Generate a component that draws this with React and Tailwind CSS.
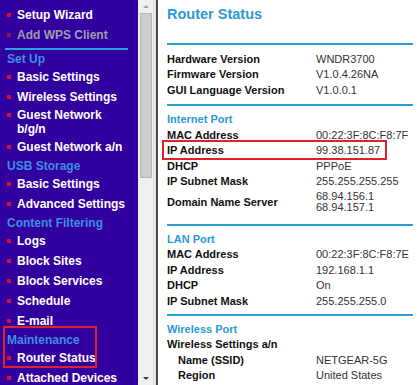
import React from 'react';

const menu = [
  { type: 'item', label: 'Setup Wizard' },
  { type: 'item', label: 'Add WPS Client', dim: true },
  { type: 'line' },
  { type: 'head', label: 'Set Up' },
  { type: 'item', label: 'Basic Settings' },
  { type: 'item', label: 'Wireless Settings' },
  { type: 'item2', label: 'Guest Network', label2: 'b/g/n' },
  { type: 'item', label: 'Guest Network a/n' },
  { type: 'head', label: 'USB Storage' },
  { type: 'item', label: 'Basic Settings' },
  { type: 'item', label: 'Advanced Settings' },
  { type: 'head', label: 'Content Filtering' },
  { type: 'item', label: 'Logs' },
  { type: 'item', label: 'Block Sites' },
  { type: 'item', label: 'Block Services' },
  { type: 'item', label: 'Schedule' },
  { type: 'item', label: 'E-mail' },
  { type: 'marked' },
  { type: 'item', label: 'Attached Devices' },
];

const Bullet = ({ dim }) => (
  <span className={`ml-[7px] mr-[6px] mt-[5px] h-[4px] w-[4px] shrink-0 ${dim ? 'bg-[#8c1450]' : 'bg-[#d0103a]'}`} />
);

const MenuItem = ({ label, dim }) => (
  <div className="flex h-[20px] items-start py-[3px] leading-[14px]">
    <Bullet dim={dim} />
    <span className={`text-[12px] font-bold whitespace-nowrap ${dim ? 'text-[#9c9cae]' : 'text-white'}`}>{label}</span>
  </div>
);

const MenuHead = ({ label }) => (
  <div className="flex h-[17px] items-center pl-[7px] text-[12px] font-bold text-[#3a8fe2]">{label}</div>
);

const Sidebar = () => (
  <div className="h-full w-[138px] shrink-0 overflow-hidden bg-[#3300a0] pt-[5px]">
    {menu.map((m, i) => {
      if (m.type === 'line') return <div key={i} className="mx-[5px] mt-[3px] h-[2px] w-[123px] bg-[#2a9fe4]" />;
      if (m.type === 'head') return <MenuHead key={i} label={m.label} />;
      if (m.type === 'item2')
        return (
          <div key={i} className="flex items-start py-[1px] leading-[14px]">
            <Bullet />
            <span className="text-[12px] font-bold text-white">
              {m.label}
              <br />
              {m.label2}
            </span>
          </div>
        );
      if (m.type === 'marked')
        return (
          <div key={i} className="relative">
            <MenuHead label="Maintenance" />
            <MenuItem label="Router Status" />
            {/* annotation box */}
            <div className="absolute left-[3px] top-[-5px] h-[42px] w-[94px] border-2 border-[#e0202c]" />
          </div>
        );
      return <MenuItem key={i} label={m.label} dim={m.dim} />;
    })}
  </div>
);

const Scrollbar = () => (
  <div className="flex h-full shrink-0">
    <div className="flex h-full w-[15px] flex-col items-center bg-[#f0f0f0]">
      <div className="flex h-[13px] w-full items-center justify-center">
        <div className="h-0 w-0 border-x-[3px] border-b-[3px] border-x-transparent border-b-[#a6a6a6]" />
      </div>
      <div className="h-[165px] w-[12px] border border-[#b4b4b4] bg-[#cdcdcd]" />
      <div className="flex-1" />
      <div className="flex h-[13px] w-full items-center justify-center">
        <div className="h-0 w-0 border-x-[3px] border-t-[3px] border-x-transparent border-t-[#404040]" />
      </div>
    </div>
    <div className="h-full w-[3px] bg-[#e4e4e4]" />
    <div className="h-full w-[2px] bg-[#4a4a4a]" />
  </div>
);

const Row = ({ label, value, indent, children }) => (
  <div className="relative flex h-[15.5px] items-center text-[11px] leading-[12px]">
    <div className={`w-[149px] shrink-0 font-bold text-[#111] ${indent ? 'pl-[11px]' : ''}`}>{label}</div>
    {value && <div className="text-[#333]">{value}</div>}
    {children}
  </div>
);

const Section = ({ title }) => (
  <div className="flex h-[15.5px] items-center text-[11px] font-bold text-[#2b9ad6]">{title}</div>
);

const Rule = ({ className = '' }) => <div className={`h-[2px] bg-[#2a9fd6] ${className}`} />;

const Content = () => (
  <div className="h-full flex-1 overflow-hidden bg-white pl-[9px] pr-[6px]" style={{ fontFamily: '"Liberation Sans", Arial, sans-serif' }}>
    <div className="flex h-[30px] items-center text-[14.5px] font-bold text-[#2b9ad6]">Router Status</div>
    <Rule className="mt-[13px]" />
    <div className="pt-[6px]">
      <Row label="Hardware Version" value="WNDR3700" />
      <Row label="Firmware Version" value="V1.0.4.26NA" />
      <Row label="GUI Language Version" value="V1.0.0.1" />
    </div>
    <Rule className="mt-[6.5px]" />
    <div className="pt-[5.25px]">
      <Section title="Internet Port" />
      <Row label="MAC Address" value="00:22:3F:8C:F8:7F" />
      <Row label="IP Address" value="99.38.151.87">
        <div className="absolute left-[-5px] top-[-2.5px] h-[20px] w-[225px] border-2 border-[#e0202c]" />
      </Row>
      <Row label="DHCP" value="PPPoE" />
      <Row label="IP Subnet Mask" value="255.255.255.255" />
      <div className="flex h-[27px] items-center text-[11px]">
        <div className="w-[149px] shrink-0 font-bold text-[#111]">Domain Name Server</div>
        <div className="leading-[11.6px] text-[#333]">
          68.94.156.1
          <br />
          68.94.157.1
        </div>
      </div>
    </div>
    <Rule className="mt-[8px]" />
    <div className="pt-[5.25px]">
      <Section title="LAN Port" />
      <Row label="MAC Address" value="00:22:3F:8C:F8:7E" />
      <Row label="IP Address" value="192.168.1.1" />
      <Row label="DHCP" value="On" />
      <Row label="IP Subnet Mask" value="255.255.255.0" />
    </div>
    <Rule className="mt-[5.25px]" />
    <div className="pt-[5.25px]">
      <Section title="Wireless Port" />
      <Row label="Wireless Settings a/n" />
      <Row label="Name (SSID)" value="NETGEAR-5G" indent />
      <Row label="Region" value="United States" indent />
    </div>
  </div>
);

export default function App() {
  return (
    <div className="flex h-[385px] w-[419px] overflow-hidden" style={{ fontFamily: '"Liberation Sans", Arial, sans-serif' }}>
      <Sidebar />
      <Scrollbar />
      <Content />
    </div>
  );
}
